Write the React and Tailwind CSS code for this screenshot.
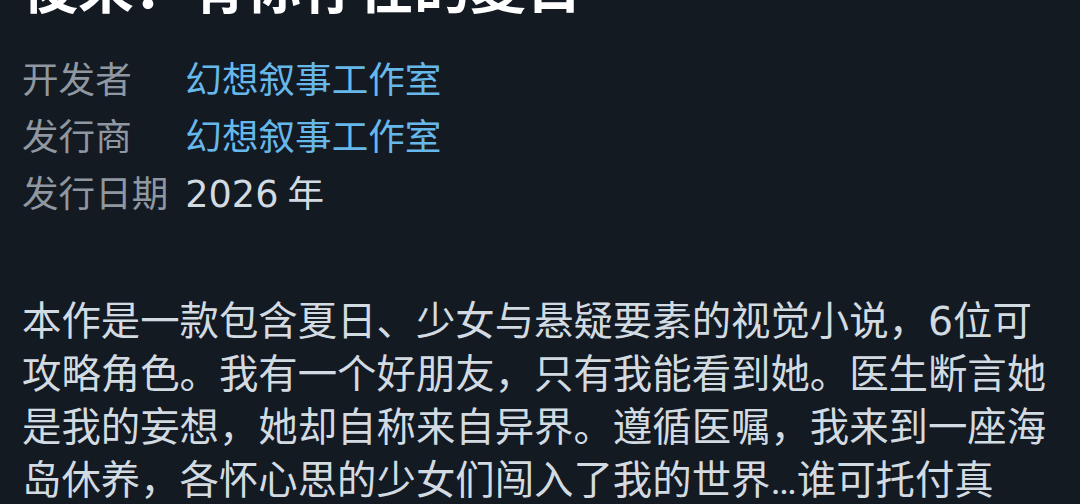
const details = [
  { label: '开发者', value: '幻想叙事工作室', link: true },
  { label: '发行商', value: '幻想叙事工作室', link: true },
  { label: '发行日期', value: <><span className="font-['DejaVu_Sans']">2026</span> 年</>, link: false },
];

export default function App() {
  return (
    <div className="h-[504px] overflow-hidden bg-[#141a22] pl-[22px] pr-[22px] font-['Roboto','Noto_Sans_CJK_SC',sans-serif]">
      {/* Title, scrolled mostly out of view */}
      <h1 className="mt-[-39px] whitespace-nowrap text-[56px] font-bold leading-none text-white">
        後来：有你存在的夏日
      </h1>

      {/* Developer / publisher / date */}
      <div className="mt-[35px] grid grid-cols-[auto_1fr] gap-x-[17px] text-[36.6px] leading-[57px]">
        {details.map((d) => (
          <div key={d.label} className="contents">
            <span className="text-[#8f98a0]">{d.label}</span>
            <span className={d.link ? 'text-[#67b8ea]' : 'text-[#d3dbe2]'}>{d.value}</span>
          </div>
        ))}
      </div>

      {/* Description */}
      <p className="mt-[72px] w-[1036px] text-[39.4px] leading-[53px] text-[#d3dbe2]">
        本作是一款包含夏日、少女与悬疑要素的视觉小说，<span className="font-['DejaVu_Sans']">6</span>位可攻略角色。我有一个好朋友，只有我能看到她。医生断言她是我的妄想，她却自称来自异界。遵循医嘱，我来到一座海岛休养，各怀心思的少女们闯入了我的世界…谁可托付真
      </p>
    </div>
  );
}
